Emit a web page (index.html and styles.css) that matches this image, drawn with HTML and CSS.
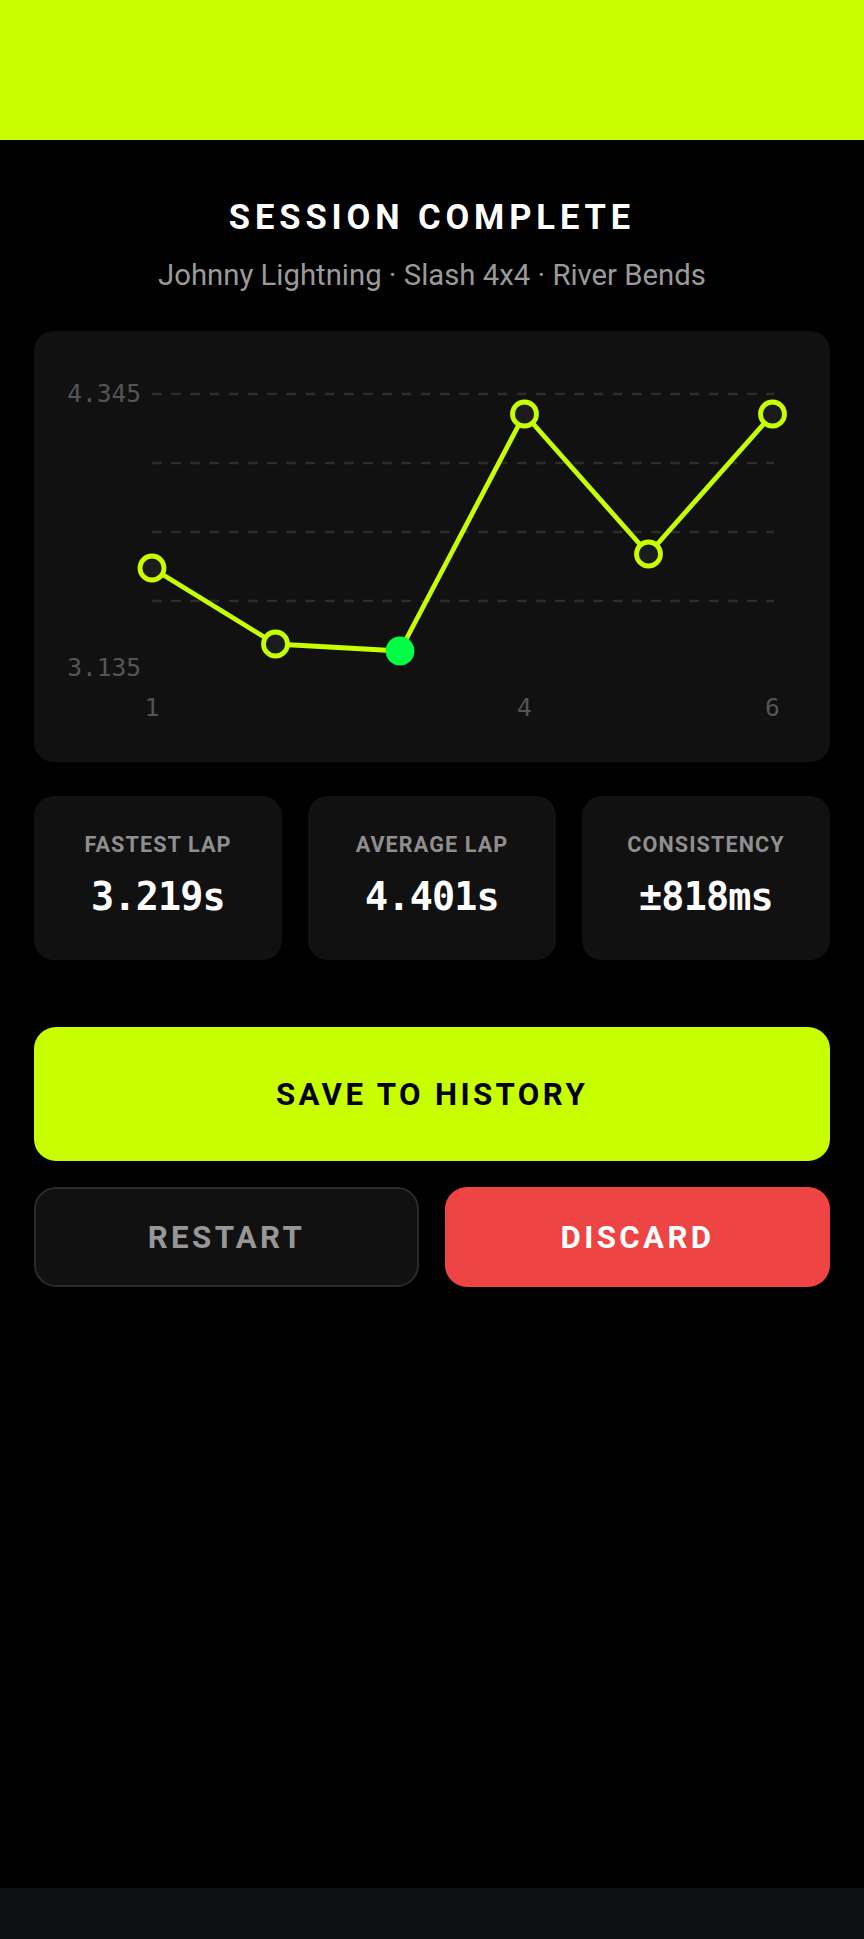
FILE: index.html
```html
<!DOCTYPE html>
<html lang="en">
<head>
    <meta charset="UTF-8">
    <meta name="viewport" content="width=device-width, initial-scale=1.0">
    <title>Session Complete</title>
    <link rel="stylesheet" href="styles.css">
</head>
<body>
    <div class="topbar"></div>

    <div class="content">
        <div class="header">
            <h1>SESSION COMPLETE</h1>
            <div class="subtitle">Johnny Lightning · Slash 4x4 · River Bends</div>
        </div>

        <div class="chart-card">
            <svg class="chart" width="796" height="431" viewBox="0 0 796 431">
                <g class="grid">
                    <line x1="118" y1="63" x2="740" y2="63"></line>
                    <line x1="118" y1="132" x2="740" y2="132"></line>
                    <line x1="118" y1="201" x2="740" y2="201"></line>
                    <line x1="118" y1="270" x2="740" y2="270"></line>
                </g>
                <g class="axis">
                    <text x="107" y="71" text-anchor="end">4.345</text>
                    <text x="107" y="345" text-anchor="end">3.135</text>
                    <text x="118" y="385" text-anchor="middle">1</text>
                    <text x="490.5" y="385" text-anchor="middle">4</text>
                    <text x="738.5" y="385" text-anchor="middle">6</text>
                </g>
                <polyline class="lap-line" points="118,237 241.5,313 366,320 490.5,83 614.5,223 738.5,83"></polyline>
                <circle class="dot" cx="118" cy="237" r="12"></circle>
                <circle class="dot" cx="241.5" cy="313" r="12"></circle>
                <circle class="dot best" cx="366" cy="320" r="14.4"></circle>
                <circle class="dot" cx="490.5" cy="83" r="12"></circle>
                <circle class="dot" cx="614.5" cy="223" r="12"></circle>
                <circle class="dot" cx="738.5" cy="83" r="12"></circle>
            </svg>
        </div>

        <div class="stats">
            <div class="stat">
                <div class="stat-label">FASTEST LAP</div>
                <div class="stat-value">3.219s</div>
            </div>
            <div class="stat">
                <div class="stat-label">AVERAGE LAP</div>
                <div class="stat-value">4.401s</div>
            </div>
            <div class="stat">
                <div class="stat-label">CONSISTENCY</div>
                <div class="stat-value">±818ms</div>
            </div>
        </div>

        <button class="btn btn-save">SAVE TO HISTORY</button>
        <div class="actions">
            <button class="btn btn-restart">RESTART</button>
            <button class="btn btn-discard">DISCARD</button>
        </div>
    </div>

    <div class="navbar"></div>
</body>
</html>
```

FILE: styles.css
```css
body {
    margin: 0;
    background-color: #000;
    font-family: Roboto, "Liberation Sans", sans-serif;
    min-height: 100vh;
    display: flex;
    flex-direction: column;
}
.topbar {
    height: 140px;
    background-color: #c8ff00;
    box-shadow: 0 1px 2px rgba(0, 0, 0, 0.5);
}
.content {
    padding: 0 34px;
}
.header {
    padding-top: 57px;
    text-align: center;
}
h1 {
    margin: 0;
    color: #fff;
    font-size: 34.5px;
    line-height: 40px;
    font-weight: 700;
    letter-spacing: 4.9px;
}
.subtitle {
    margin-top: 20px;
    color: #9a9a9a;
    font-size: 29.3px;
    line-height: 36px;
}
.chart-card {
    margin-top: 38px;
    height: 431px;
    background-color: #111;
    border-radius: 20px;
    overflow: hidden;
}
.chart {
    display: block;
}
.grid line {
    stroke: #2c2c2c;
    stroke-width: 2.4;
    stroke-dasharray: 9.6 9.6;
}
.axis text {
    fill: #555;
    font-family: "DejaVu Sans Mono", monospace;
    font-size: 24.5px;
}
.lap-line {
    fill: none;
    stroke: #c8ff00;
    stroke-width: 4.8;
    stroke-linejoin: round;
}
.dot {
    fill: #1c1c1c;
    stroke: #c8ff00;
    stroke-width: 4.8;
}
.dot.best {
    fill: #00ff44;
    stroke: none;
}
.stats {
    margin-top: 34px;
    display: grid;
    grid-template-columns: repeat(3, 1fr);
    gap: 26px;
}
.stat {
    background-color: #111;
    border-radius: 20px;
    padding: 38px 0 44px;
    text-align: center;
}
.stat-label {
    color: #8f8f8f;
    font-size: 21.6px;
    line-height: 1;
    font-weight: 700;
    letter-spacing: 1.1px;
}
.stat-value {
    margin-top: 22px;
    color: #fff;
    font-family: "DejaVu Sans Mono", monospace;
    font-size: 38.4px;
    line-height: 1;
    font-weight: 700;
    letter-spacing: -0.8px;
}
.btn {
    display: block;
    width: 100%;
    border: none;
    font-family: Roboto, "Liberation Sans", sans-serif;
    font-size: 31.2px;
    font-weight: 700;
    letter-spacing: 3.4px;
    cursor: pointer;
}
.btn-save {
    margin-top: 67px;
    height: 134px;
    border-radius: 22px;
    background-color: #c8ff00;
    color: #000;
}
.actions {
    margin-top: 26px;
    display: grid;
    grid-template-columns: 1fr 1fr;
    gap: 26px;
}
.btn-restart, .btn-discard {
    height: 100px;
    border-radius: 22px;
}
.btn-restart {
    background-color: #111;
    border: 2px solid #2a2a2a;
    color: #979797;
}
.btn-discard {
    background-color: #ef4444;
    color: #fff;
}
.navbar {
    margin-top: auto;
    height: 51px;
    background-color: #0e0f13;
}
```
